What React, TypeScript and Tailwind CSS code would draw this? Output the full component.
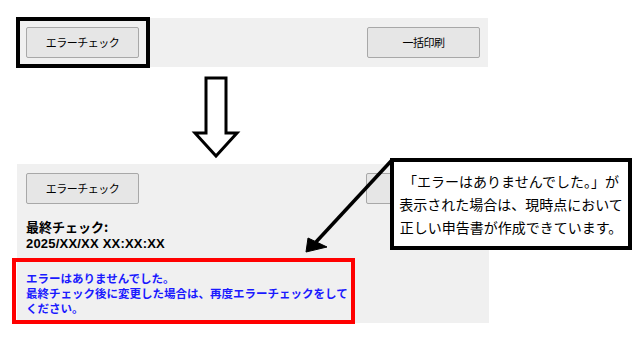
const jp = "font-['Noto_Sans_CJK_JP','Noto_Sans',sans-serif]"

function WinButton({ label }: { label: string }) {
  return (
    <div className="w-[113px] h-[31px] flex items-center justify-center rounded-[2px] border border-[#a8a8a8] bg-[#e6e6e6] text-[11px] text-black leading-none tracking-[-0.5px]">
      {label}
    </div>
  )
}

export default function App() {
  return (
    <div className={`relative w-[642px] h-[340px] overflow-hidden bg-white ${jp}`}>
      {/* before */}
      <div className="ml-[17px] mt-[18px] w-[471px] h-[49px] bg-[#f0f0f0] flex items-start justify-between pl-[9px] pr-[8px] pt-[9px]">
        <WinButton label="エラーチェック" />
        <WinButton label="一括印刷" />
      </div>

      {/* down arrow */}
      <svg className="block ml-[190px] mt-[8px]" width="52" height="92" viewBox="190 75 52 92">
        <polygon
          points="206,78 226,78 226,133 237,133 216,156 195,133 206,133"
          fill="white"
          stroke="black"
          strokeWidth="3"
          strokeLinejoin="miter"
        />
      </svg>

      {/* after */}
      <div className="ml-[17px] mt-[-3px] w-[472px] h-[159px] bg-[#f0f0f0] pl-[9px] pt-[9px]">
        <div className="flex items-start justify-between pr-[10px]">
          <WinButton label="エラーチェック" />
          {/* hidden under the callout */}
          <WinButton label="" />
        </div>
        <div className="mt-[14px] text-[13px] font-bold leading-[17px] text-black">
          <div>最終チェック:</div>
          <div className="font-['Liberation_Sans',sans-serif] tracking-[0.2px]">2025/XX/XX XX:XX:XX</div>
        </div>
        <div className="mt-[19px] text-[11.5px] font-bold leading-[15px] text-[#1a1aff] whitespace-nowrap">
          <div>エラーはありませんでした。</div>
          <div>最終チェック後に変更した場合は、再度エラーチェックをして</div>
          <div>ください。</div>
        </div>
      </div>

      {/* highlight frames */}
      <div className="absolute left-[16px] top-[17px] w-[134px] h-[51px] border-[4px] border-black pointer-events-none" />
      <div className="absolute left-[12px] top-[258px] w-[343px] h-[66px] border-[4px] border-[#ff0000] pointer-events-none" />

      {/* pointer arrow */}
      <svg className="absolute left-0 top-0 pointer-events-none" width="642" height="340">
        <line x1="392" y1="160" x2="316" y2="242" stroke="black" strokeWidth="3.5" />
        <polygon points="306,252 308,238 327,247" fill="black" stroke="black" strokeWidth="1" />
      </svg>

      {/* callout */}
      <div className="absolute left-[390px] top-[158px] w-[242px] h-[92px] bg-white border-[4px] border-black flex flex-col items-center justify-center text-[14px] leading-[23px] text-black whitespace-nowrap">
        <div>「エラーはありませんでした。」が</div>
        <div>表示された場合は、現時点において</div>
        <div>正しい申告書が作成できています。</div>
      </div>
    </div>
  )
}
